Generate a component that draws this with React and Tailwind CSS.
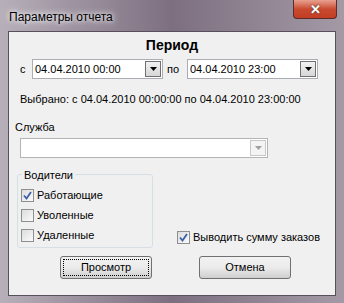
import { useState } from 'react'

const font = { fontFamily: '"Liberation Sans", Arial, sans-serif' }

function Arrow({ muted }) {
  return (
    <svg width="7" height="4" viewBox="0 0 7 4">
      <path d="M0 0h7L3.5 4z" fill={muted ? '#a0a0a0' : '#000'} />
    </svg>
  )
}

function Combo({ value, muted, className }) {
  return (
    <div className={`flex h-[20px] items-center border bg-white ${muted ? 'border-[#b4b4b4]' : 'border-[#abadb3]'} ${className}`}>
      <div className="flex-1 truncate pl-[2px] text-[11px] text-black">{value}</div>
      <div
        className={`mr-[1px] flex h-[16px] w-[16px] items-center justify-center border ${
          muted ? 'border-[#c8c8c8] bg-[#f4f4f4]' : 'border-[#707070] bg-gradient-to-b from-[#f2f2f2] to-[#d6d6d6]'
        }`}
      >
        <Arrow muted={muted} />
      </div>
    </div>
  )
}

function Check({ checked, label, onChange }) {
  return (
    <label className="flex h-[20px] cursor-default items-center gap-[3px] text-[11px] text-black">
      <span className="flex h-[13px] w-[13px] items-center justify-center border border-[#8e8f8f] bg-gradient-to-br from-[#dcdcdc] to-[#fbfbfb]">
        {checked && (
          <svg width="9" height="9" viewBox="0 0 9 9">
            <path d="M1 4.5l2.5 3L8 1" fill="none" stroke="#3c5fa8" strokeWidth="1.8" />
          </svg>
        )}
      </span>
      <input type="checkbox" className="hidden" checked={checked} onChange={onChange} />
      {label}
    </label>
  )
}

export default function App() {
  const [drivers, setDrivers] = useState({ active: true, fired: false, deleted: false })
  const [showSum, setShowSum] = useState(true)

  return (
    <div
      style={font}
      className="flex h-[303px] w-[344px] flex-col bg-gradient-to-r from-[#b7b0ba] via-[#7d6f80] to-[#a49aa6] px-[8px] pb-[7px]"
    >
      {/* title bar */}
      <div className="flex h-[31px] items-start justify-between">
        <div className="pl-[1px] pt-[8px] text-[12px] text-black [text-shadow:0_0_8px_#fff,0_0_4px_#fff]">Параметры отчета</div>
        <div className="-mr-[1px] flex h-[19px] w-[44px] items-center justify-center rounded-b-[4px] border border-t-0 border-[#5d2b2b] bg-gradient-to-b from-[#e8a090] via-[#c94a30] to-[#c23d23]">
          <span className="text-[13px] font-bold leading-none text-white [text-shadow:0_0_2px_#333]">✕</span>
        </div>
      </div>

      {/* client */}
      <div className="flex flex-1 flex-col border border-[#57505a] bg-[#f0f0f0] px-[11px]">
        <div className="pt-[3px] text-center text-[14px] font-bold text-black">Период</div>

        <div className="mt-[3px] flex items-center text-[11px] text-black">
          <span className="w-[12px]">с</span>
          <Combo value="04.04.2010 00:00" className="w-[131px]" />
          <span className="ml-[4px] w-[20px]">по</span>
          <Combo value="04.04.2010 23:00" className="w-[131px]" />
        </div>

        <div className="mt-[12px] text-[11px] text-black">Выбрано: с 04.04.2010 00:00:00 по 04.04.2010 23:00:00</div>

        <div className="mt-[11px] -ml-[5px] text-[11px] text-black">Служба</div>
        <Combo value="" muted className="mt-[3px] w-[248px]" />

        <div className="mt-[16px] flex items-end">
          <div className="relative -ml-[3px] h-[74px] w-[136px] rounded-[3px] border border-[#d5dfe5] pl-[3px] pt-[10px]">
            <div className="absolute -top-[8px] left-[4px] bg-[#f0f0f0] px-[2px] text-[11px] text-black">Водители</div>
            <Check
              checked={drivers.active}
              label="Работающие"
              onChange={() => setDrivers((d) => ({ ...d, active: !d.active }))}
            />
            <Check
              checked={drivers.fired}
              label="Уволенные"
              onChange={() => setDrivers((d) => ({ ...d, fired: !d.fired }))}
            />
            <Check
              checked={drivers.deleted}
              label="Удаленные"
              onChange={() => setDrivers((d) => ({ ...d, deleted: !d.deleted }))}
            />
          </div>
          <div className="ml-[24px] pb-[1px]">
            <Check checked={showSum} label="Выводить сумму заказов" onChange={() => setShowSum((v) => !v)} />
          </div>
        </div>

        <div className="mt-[8px] flex">
          <button className="ml-[40px] h-[23px] w-[92px] rounded-[3px] border border-[#707070] bg-gradient-to-b from-[#f2f2f2] via-[#ebebeb] to-[#cfcfcf] p-[2px] text-[11px] text-black">
            <div className="flex h-full items-center justify-center border border-dotted border-black">Просмотр</div>
          </button>
          <button className="ml-[47px] h-[23px] w-[92px] rounded-[3px] border border-[#707070] bg-gradient-to-b from-[#f2f2f2] via-[#ebebeb] to-[#cfcfcf] text-[11px] text-black">
            Отмена
          </button>
        </div>
      </div>
    </div>
  )
}
